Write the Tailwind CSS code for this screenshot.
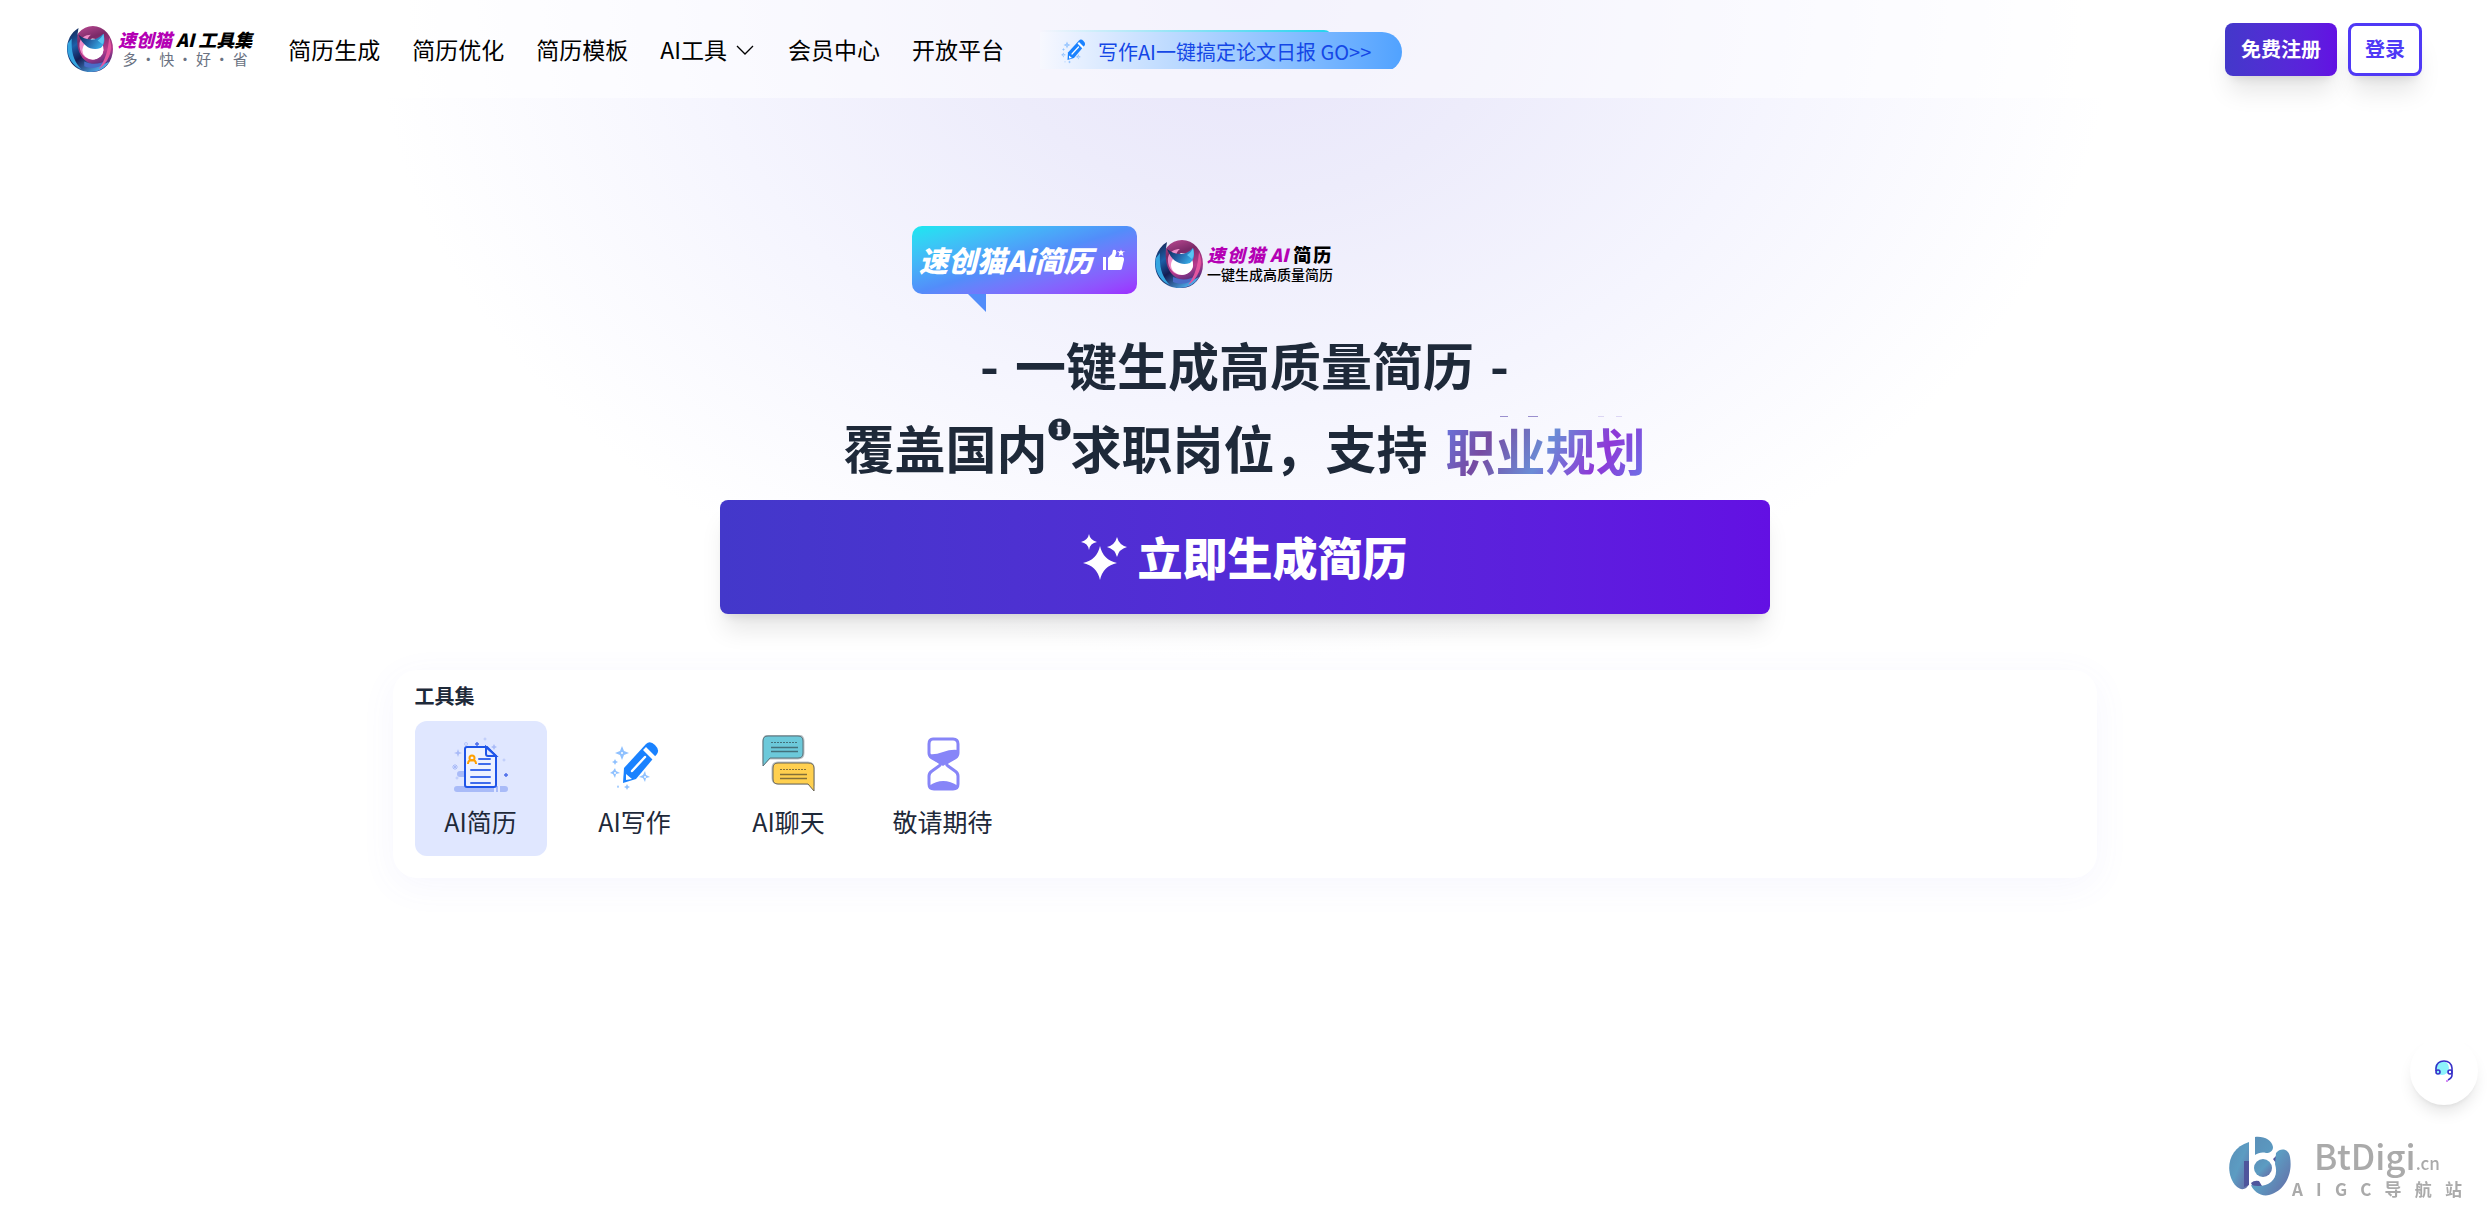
<!DOCTYPE html>
<html lang="zh-CN">
<head>
  <meta charset="UTF-8">
  <meta name="viewport" content="width=device-width, initial-scale=1.0">
  <title>速创猫AI简历</title>
  <script src="https://cdn.jsdelivr.net/npm/@tailwindcss/browser@4"></script>
</head>
<body class="min-h-screen bg-white font-['Noto_Sans_CJK_SC',sans-serif] text-gray-800">

  <!-- shared shapes -->
  <svg class="absolute size-0" aria-hidden="true">
    <defs>
      <linearGradient id="ringL" x1="0" y1="0" x2="0.7" y2="1">
        <stop offset="0" stop-color="#14163f"/><stop offset=".35" stop-color="#1c5fa8"/><stop offset=".6" stop-color="#141c52"/><stop offset="1" stop-color="#4fa9e8"/>
      </linearGradient>
      <linearGradient id="ringR" x1="0.2" y1="0" x2="0.5" y2="1">
        <stop offset="0" stop-color="#b8478f"/><stop offset=".3" stop-color="#7a2a68"/><stop offset=".65" stop-color="#b83a8e"/><stop offset="1" stop-color="#2c2a74"/>
      </linearGradient>
      <linearGradient id="cat" x1="0" y1="0" x2="1" y2="0.4">
        <stop offset="0" stop-color="#10204e"/><stop offset=".5" stop-color="#225a9e"/><stop offset="1" stop-color="#35a5e0"/>
      </linearGradient>
      <symbol id="logo" viewBox="0 0 48 48">
        <path fill="url(#ringR)" fill-rule="evenodd" d="M27 0a21 24 0 0 1 0 48 21 24 0 0 1 0-48zM26 13a12 13 0 0 0 0 22 12 11 0 0 0 12-11 12 11 0 0 0-12-11z"/>
        <path fill="#f08cc8" d="M13 18c1-6 6-9 12-9-7 5-7 20 4 26-10 1-17-7-16-17z"/>
        <ellipse cx="27" cy="25" rx="11" ry="10" fill="#fff"/>
        <path fill="url(#ringL)" d="M12 2C4 7 0 15 0 24c0 14 11 24 24 24 9 0 16-4 20-11-8 5-18 5-25-1-8-7-10-18-7-34z"/>
        <path fill="#35a5e0" d="M1 18c-2 13 4 23 14 27C8 38 4 29 5 13z"/>
        <path fill="#4a6cc8" d="M18 42c9 4 19 1 25-7-8 5-17 6-25 2z"/>
        <path fill="#e4569f" d="M44 12c5 12 0 26-11 33 7-9 10-20 11-33z"/>
        <path fill="url(#cat)" d="M12 9c4 3 8 5 14 5 4 0 8-2 12-6 2 7 1 12-3 15-9 3-18-1-23-14z"/>
        <path fill="#5ac4f2" d="M38 8c-1 3-3 5-6 7l5 4c2-3 2-7 1-11z"/>
      </symbol>
      <symbol id="pen" viewBox="0 0 50 50">
        <path fill="#1a82ff" d="M13 42l1-15L36 3q4-4 9 1t2 9L26 38z"/>
        <path fill="#fff" d="M33 9l3-3 10 10-3 3zM16 33l6 5-6 1z"/>
        <path stroke="#fff" stroke-width="2.4" stroke-linecap="round" d="M22 30l13-14"/>
        <g fill="#8fc1ff">
          <path d="M12 5l2 5 5 2-5 2-2 5-2-5-5-2 5-2zM5 27l1 3 4 2-4 1-1 4-2-4-3-1 3-2zM35 30l1 4 4 2-4 1-1 4-2-4-4-1 4-2zM5 18l1 2 2 1-2 1-1 2-1-2-2-1 2-1zM17 43l1 2 2 1-2 1-1 2-1-2-2-1 2-1zM8 44l1 2-1 1-1-1z"/>
        </g>
        <circle cx="12" cy="12" r="1" fill="#fff"/><circle cx="35" cy="36" r="1" fill="#fff"/><circle cx="5" cy="32" r="1" fill="#fff"/>
      </symbol>
    </defs>
  </svg>

  <div class="min-h-screen bg-[radial-gradient(ellipse_870px_660px_at_50%_0px,#e8e5fa_0%,#edecfb_30%,#f5f5fe_62%,#ffffff_100%)]">

    <header class="flex h-[98px] items-center bg-white/50 px-[67px]">
      <a href="#" class="flex items-center gap-[5px]">
        <svg class="size-[46px]"><use href="#logo"/></svg>
        <span class="flex flex-col items-center">
          <span class="flex gap-1 text-[18px] leading-[20px] font-black italic text-black">
            <span class="flex text-[#b400b4]"><span>速</span><span>创</span><span>猫</span></span><span>AI</span><span class="flex"><span>工</span><span>具</span><span>集</span></span>
          </span>
          <span class="text-[15px] leading-[20px] text-gray-500">多 · 快 · 好 · 省</span>
        </span>
      </a>

      <nav class="ml-9 flex items-center gap-8 text-[23px] leading-[32px] whitespace-nowrap text-black">
        <a href="#">简历生成</a>
        <a href="#">简历优化</a>
        <a href="#">简历模板</a>
        <button type="button" class="flex items-center gap-[9px] pr-[2px]">AI工具
          <svg class="mt-1 size-[18px]" viewBox="0 0 18 18" fill="none" stroke="currentColor" stroke-width="1.3"><path d="M1 4l8 8 8-8"/></svg>
        </button>
        <a href="#">会员中心</a>
        <a href="#">开放平台</a>
      </nav>

      <a href="#" class="relative ml-9 block h-[39px] w-[362px] overflow-hidden pt-[2px]">
        <span class="absolute top-0 left-0 h-[10px] w-[292px] rounded-tr-lg bg-linear-to-r from-transparent to-[#22d3ee]"></span>
        <span class="relative flex h-[40px] items-center gap-3 rounded-r-full bg-linear-to-r from-[#f7f8fe] to-blue-400 pl-[21px] text-[20px] whitespace-nowrap text-blue-700">
          <svg class="size-[25px]"><use href="#pen"/></svg>写作AI一键搞定论文日报 GO&gt;&gt;
        </span>
      </a>

      <div class="ml-auto flex gap-[11px] text-[20px] leading-[28px] font-bold whitespace-nowrap">
        <button type="button" class="h-[53px] rounded-lg bg-linear-to-r from-[#4338ca] to-[#6310e3] px-4 text-white shadow-xl">免费注册</button>
        <button type="button" class="h-[53px] rounded-lg border-3 border-indigo-600 bg-white px-[14px] text-indigo-600 shadow-xl">登录</button>
      </div>
    </header>

    <main class="px-4 pt-[128px]">
      <section class="flex flex-col items-center">
        <div class="flex w-full max-w-[665px] items-center gap-[18px]">
          <div class="relative flex h-[68px] w-[225px] items-center gap-[10px] rounded-[10px] bg-linear-to-br from-[#16e8f0] via-[#528dfa] to-[#9d2bff] pl-[7px] text-[29px] font-black whitespace-nowrap text-white italic">
            速创猫Ai简历
            <svg class="size-6 shrink-0" viewBox="0 0 24 24" fill="currentColor">
              <path d="M1 9h3v13H1zM6 10l4-4 1-4c3-1 4 1 3 4l-1 3h7c2 0 2 1 2 3l-2 8c0 1-1 2-2 2H6z"/>
              <path stroke="#7a66fc" stroke-width=".8" d="M19 0l1 3h4l-3 2 1 4-3-2-3 2 1-4-3-2h4z"/>
            </svg>
            <svg class="absolute top-full left-[56px] h-[18px] w-[18px]" viewBox="0 0 18 18"><path fill="#528dfa" d="M0 0h18v18z"/></svg>
          </div>
          <div class="flex items-center gap-1 pt-[8px]">
            <svg class="size-[48px]"><use href="#logo"/></svg>
            <div class="text-black">
              <div class="flex gap-[5px] text-[18px] leading-[20px] font-black"><span class="flex gap-[2px] text-[#b400b4] italic"><span>速</span><span>创</span><span>猫</span></span><span class="text-[#b400b4] italic">AI</span><span class="flex gap-[2px]"><span>简</span><span>历</span></span></div>
              <div class="text-[14px] leading-[20px] font-medium">一键生成高质量简历</div>
            </div>
          </div>
        </div>

        <h1 class="mt-[29px] text-center text-[51px] leading-[82px] font-bold">
          <span class="flex justify-center gap-4"><span>-</span><span>一键生成高质量简历</span><span>-</span></span>
          <span class="flex h-[84px] items-center justify-center whitespace-nowrap">覆盖国内<svg class="mb-[36px] size-[23px]" viewBox="0 0 24 24"><circle cx="12" cy="12" r="11.5" fill="currentColor"/><path fill="#f2f1fd" d="M10 4h4v4h-4zM9 9h5v8h1v2H9v-2h1v-6H9z"/></svg>求职岗位，支持
            <span class="relative ml-[18px] bg-[linear-gradient(120deg,#667eea_0%,#764ba2_25%,#6b8dd6_50%,#8e37d7_75%,#667eea_100%)] bg-clip-text pt-1 text-[50px] text-transparent">职业规划<svg class="absolute top-3 left-[54px] h-[2px] w-[130px]"><path fill="#9a8fce" d="M0 0h8v1H0zM28 0h10v1H28z"/><path fill="#dcd6f4" d="M98 0h6v1h-6zM116 0h6v1h-6z"/></svg></span>
          </span>
        </h1>

        <button type="button" class="mt-[11px] flex h-[114px] w-full max-w-[1050px] items-center justify-center gap-[10px] rounded-lg bg-linear-to-r from-[#4338ca] to-[#6310e3] text-[45px] font-black text-white shadow-xl">
          <svg class="size-[46px]" viewBox="0 0 46 46" fill="currentColor">
            <path d="M19 12q3 14 17 17-14 3-17 17-3-14-17-17 14-3 17-17zM8 0q1 6 8 8-7 1-8 8-1-7-8-8 7-2 8-8zM36 3q2 8 10 10-8 2-10 10-2-8-10-10 8-2 10-10z"/>
          </svg>
          立即生成简历
        </button>
      </section>

      <section class="mx-auto mt-14 w-full max-w-[1704px] rounded-3xl bg-white px-[22px] pt-3 pb-[22px] shadow-[0_8px_36px_rgba(99,102,241,0.06)]">
        <h2 class="text-[20px] leading-[28px] font-bold">工具集</h2>
        <div class="mt-[11px] flex gap-[22px] text-[25px] leading-[36px] whitespace-nowrap">
          <a href="#" class="flex h-[135px] w-[132px] flex-col items-center rounded-xl bg-indigo-100 pt-4">
            <svg class="h-[58px] w-[58px]" viewBox="0 0 58 58" fill="none">
              <g fill="#a9bbf8"><rect x="2" y="49" width="54" height="6" rx="3"/><rect x="5" y="34" width="16" height="6" rx="3"/><path d="M6 12l1 3 3 1-3 1-1 3-1-3-3-1 3-1zM42 7l1 2 2 1-2 1-1 2-1-2-2-1 2-1z"/></g>
              <path stroke="#e0e7ff" stroke-width="2" d="M43 48v8M47 48v8"/>
              <path stroke="#a9bbf8" d="M0 30h6M3 27v6M1 28l4 4M5 28l-4 4"/>
              <g stroke="#b9c7fa"><circle cx="33" cy="2" r="1"/><circle cx="14" cy="7" r="1.5"/><circle cx="52" cy="23" r="1"/><circle cx="5" cy="41" r="1"/></g>
              <path stroke="#4a6bea" stroke-width="1.4" d="M23 7h4M25 5v4M52 38h4M54 36v4"/>
              <path fill="#eef2ff" stroke="#1f55e8" stroke-width="2" d="M15 10h20l9 9v29a2 2 0 0 1-2 2H15a2 2 0 0 1-2-2V12a2 2 0 0 1 2-2z"/>
              <path fill="#e0e7ff" stroke="#1f55e8" stroke-width="2" d="M34 10v7q0 2 2 2h8z"/>
              <path stroke="#3f6cec" stroke-width="2" stroke-linecap="round" d="M27 22h11M27 27h11M19 33h19M19 40h19M19 46h19"/>
              <g stroke="#ffa000" stroke-width="2"><circle cx="20" cy="21" r="2.5"/><path d="M16 27q0-4 4-4t4 4"/></g>
            </svg>
            <span class="mt-2">AI简历</span>
          </a>
          <a href="#" class="flex h-[135px] w-[132px] flex-col items-center rounded-xl pt-4">
            <svg class="my-1 size-[50px]"><use href="#pen"/></svg>
            <span class="mt-2">AI写作</span>
          </a>
          <a href="#" class="flex h-[135px] w-[132px] flex-col items-center rounded-xl pt-[14px]">
            <svg class="mb-[2px] size-[58px]" viewBox="0 0 58 58" stroke-linejoin="round">
              <path fill="#6cc9da" stroke="#bcc4c8" stroke-width="3" d="M9 1h29q5 0 5 5v12q0 5-5 5H9l-5 5V6q0-5 5-5z"/>
              <path fill="#6cc9da" stroke="#5b7078" d="M8 1h30q5 0 5 5v12q0 5-5 5H10l-7 8V6q0-5 5-5z"/>
              <path fill="#ffd04f" stroke="#bcc4c8" stroke-width="3" d="M18 28h30q5 0 5 5v17l-3-2H18q-5 0-5-5V33q0-5 5-5z"/>
              <path fill="#ffd04f" stroke="#6b6658" d="M18 28h30q6 0 6 5v23l-6-7H18q-5 0-5-5V33q0-5 5-5z"/>
              <path stroke="#43717b" d="M11 12.500h27M11 16.500h27" stroke-width="1.4"/>
              <path stroke="#43717b" stroke-dasharray="2 1" d="M11 7.500h27"/>
              <path stroke="#837038" d="M20 39.500h27M20 43.500h27" stroke-width="1.4"/>
              <path stroke="#837038" stroke-dasharray="2 1" d="M20 34.500h27"/>
            </svg>
            <span class="mt-2">AI聊天</span>
          </a>
          <a href="#" class="flex h-[135px] w-[132px] flex-col items-center rounded-xl pt-[14px]">
            <svg class="mb-[2px] size-[58px]" viewBox="0 0 58 58" fill="none">
              <path stroke="#8785f8" stroke-width="3" stroke-linejoin="round" d="M19 4h20q5 0 5 5v9q0 3-3 5l-7 4q-3 2 0 4l7 5q3 2 3 5v8q0 5-5 5H20q-5 0-5-5v-8q0-3 3-5l7-5q3-2 0-4l-7-4q-3-2-3-5V9q0-5 4-5z"/>
              <path fill="#8785f8" d="M15 19q6 1 14-2t15-2v7L32 29l-3 2-3-2-11-7zM15 51q14-10 29 0v3H15z"/>
            </svg>
            <span class="mt-2">敬请期待</span>
          </a>
        </div>
      </section>
    </main>
  </div>

  <button type="button" aria-label="在线客服" class="fixed right-[11px] bottom-[101px] flex size-[68px] items-center justify-center rounded-full bg-white shadow-lg">
    <svg class="size-6" viewBox="0 0 24 24" fill="none" stroke="#3730c8" stroke-width="1.6">
      <circle cx="10" cy="9" r="7" fill="#8df3fb" stroke="none"/>
      <path d="M4 12V9q1-7 8-7t8 7v7q0 3-4 5"/><circle cx="6" cy="13" r="2"/><circle cx="18" cy="13" r="2"/>
      <path stroke="#d58cf5" stroke-width="2" d="M14 22h2"/>
    </svg>
  </button>

  <div class="fixed right-[27px] bottom-[8px] flex items-end text-[#aaaaaa]">
    <svg class="size-[64px]" viewBox="0 0 64 64">
      <defs><linearGradient id="bt" x1="0" y1="0" x2="1" y2="1"><stop offset="0" stop-color="#5a8fb8"/><stop offset=".5" stop-color="#5c9cc2"/><stop offset="1" stop-color="#6668a4"/></linearGradient></defs>
      <path fill="url(#bt)" d="M21 8v42c-3 7-9 6-13 2C-3 40-2 15 21 8z"/>
      <path fill="#4f559c" d="M16 27h5v24l-5 2zM23 49q3-3 8-2l6 10-12-4zM45 25l5-5v12z"/>
      <path fill="url(#bt)" d="M27 3c9-1 17 3 18 10 0 4-3 6-7 6-4-1-8 0-11 2zM48 19c5-6 13-4 14 4 3 17-5 34-21 38-8 2-16-4-18-10 16 4 29-5 24-21z"/>
      <circle cx="35" cy="34" r="9" fill="url(#bt)"/>
    </svg>
    <div class="w-[170px]">
      <div class="pl-[22px] text-[35px] leading-[34px] font-medium">BtDigi<span class="text-[17px]">.cn</span></div>
      <div class="flex justify-between text-[17px] leading-[18px] font-bold"><span>A</span><span>I</span><span>G</span><span>C</span><span>导</span><span>航</span><span>站</span></div>
    </div>
  </div>

</body>
</html>
